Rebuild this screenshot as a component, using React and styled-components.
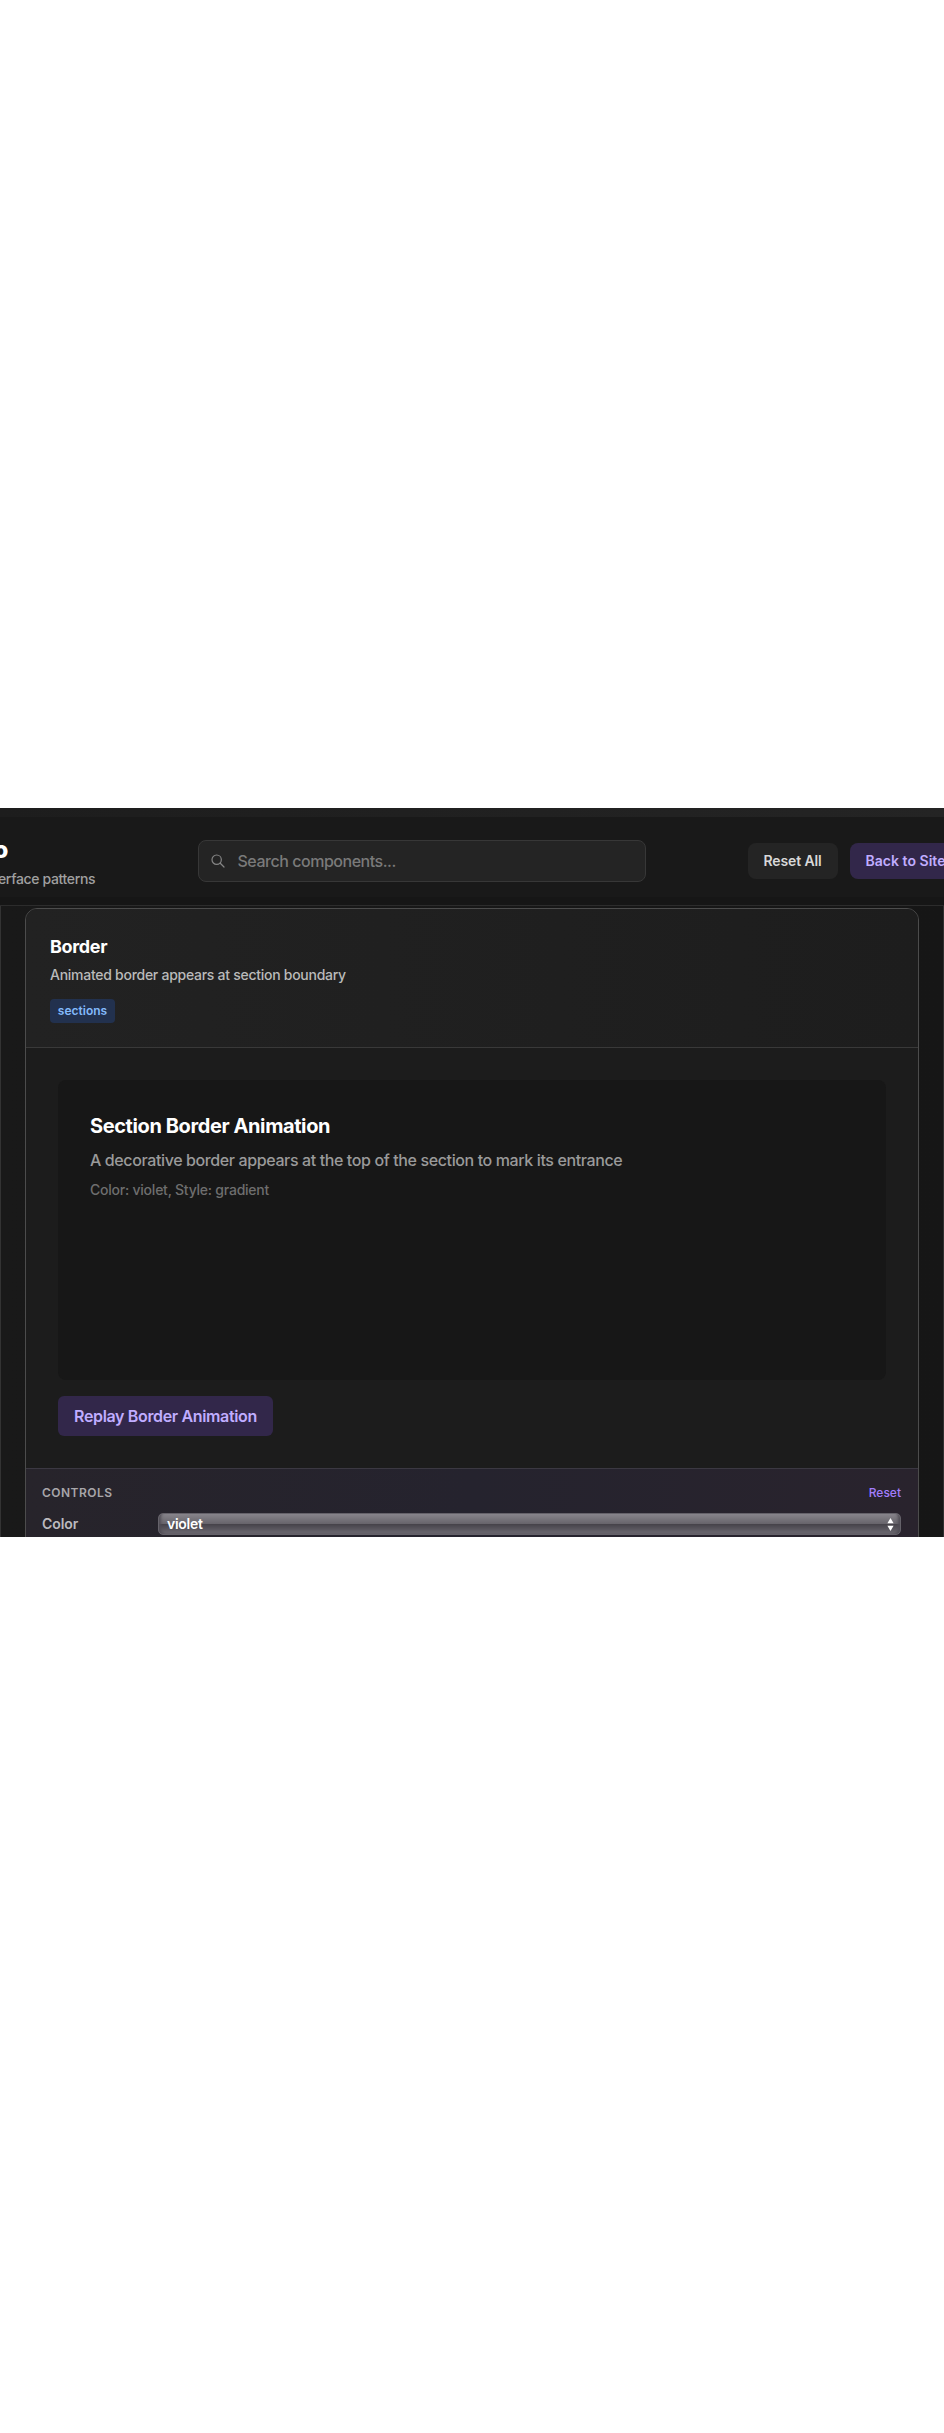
import React from "react";
import styled, { createGlobalStyle } from "styled-components";

const GlobalStyle = createGlobalStyle`
  *, *::before, *::after { box-sizing: border-box; }
  body {
    margin: 0;
    background: #fff;
    font-family: Inter, "Liberation Sans", sans-serif;
    -webkit-font-smoothing: antialiased;
  }
  h1, h2, h3, p { margin: 0; }
  button { font-family: inherit; border: 0; padding: 0; flex: none; }
`;

const Page = styled.div`
  height: 2433px;
  padding-top: 808px;
  overflow: hidden;
`;

const Screen = styled.div`
  display: flex;
  flex-direction: column;
  height: 729px;
  overflow: hidden;
  background: #181818;
`;

const TopStrip = styled.div`
  flex: none;
  height: 9px;
  background: linear-gradient(90deg, #1d1d1d, #242424);
`;

const Header = styled.header`
  flex: none;
  display: flex;
  align-items: center;
  height: 89px;
  overflow: hidden;
  background: linear-gradient(#191919 0 80px, #161616 80px);
  border-bottom: 1px solid #2c2c2c;
`;

const Brand = styled.div`
  flex: none;
  width: 197.5px;
  display: flex;
  flex-direction: column;
  gap: 3px;
  padding-top: 1px;
  white-space: nowrap;
`;

const BrandTitle = styled.h1`
  margin-left: -6.5px;
  font-size: 24px;
  line-height: 32px;
  font-weight: 800;
  color: #fff;
`;

const BrandSubtitle = styled.p`
  margin-left: -2px;
  font-size: 14px;
  line-height: 20px;
  font-weight: 500;
  letter-spacing: -0.35px;
  color: #a0a0a0;
`;

const SearchBox = styled.div`
  flex: none;
  display: flex;
  align-items: center;
  gap: 12px;
  width: 448px;
  height: 42px;
  padding-left: 11px;
  border: 1px solid #373737;
  border-radius: 8px;
  background: #242424;
  font-size: 16px;
  font-weight: 500;
  letter-spacing: -0.47px;
  color: #7a7a7a;
`;

const SearchGlyph = styled.svg`
  width: 16px;
  height: 16px;
  fill: none;
  stroke: #858585;
  stroke-width: 1.8;
  stroke-linecap: round;
  stroke-linejoin: round;
`;

const Actions = styled.div`
  flex: none;
  display: flex;
  gap: 12px;
  margin-left: 102px;
`;

const HeaderButton = styled.button`
  width: ${(p) => (p.$accent ? 112 : 90)}px;
  height: 36px;
  padding-bottom: 1px;
  border-radius: 8px;
  background: ${(p) => (p.$accent ? "#32274a" : "#242424")};
  color: ${(p) => (p.$accent ? "#c0adff" : "#d8d8d8")};
  font-size: 14px;
  font-weight: 600;
  letter-spacing: ${(p) => (p.$accent ? 0.03 : -0.12)}px;
`;

const Main = styled.main`
  flex: 1;
  min-height: 0;
  padding: 2px 24px 0;
  border-left: 1px solid #333;
  border-right: 1px solid #303030;
  background: linear-gradient(90deg, #191919, #161616);
`;

const Card = styled.article`
  height: 700px;
  border: 1px solid #4c4c4c;
  border-radius: 12px;
  overflow: hidden;
  background: #1c1c1c;
`;

const CardHead = styled.div`
  height: 139px;
  padding: 24px 24px 0;
  border-bottom: 1px solid #393939;
  background: linear-gradient(90deg, #222, #1d1d1d);
`;

const CardTitle = styled.h2`
  font-size: 18px;
  line-height: 28px;
  font-weight: 700;
  letter-spacing: -0.35px;
  color: #fff;
`;

const CardText = styled.p`
  margin-top: 4px;
  font-size: 14px;
  line-height: 20px;
  font-weight: 500;
  letter-spacing: -0.27px;
  color: #bababa;
`;

const Tag = styled.span`
  display: block;
  width: 65px;
  height: 24px;
  margin-top: 14px;
  border-radius: 4px;
  background: #22314e;
  text-align: center;
  font-size: 12px;
  line-height: 24px;
  font-weight: 600;
  letter-spacing: 0;
  color: #83b9fb;
`;

const Preview = styled.div`
  padding: 32px;
`;

const Stage = styled.section`
  height: 300px;
  padding: 32px;
  border-radius: 8px;
  background: #171717;
`;

const StageTitle = styled.h3`
  font-size: 20px;
  line-height: 28px;
  font-weight: 700;
  letter-spacing: -0.4px;
  color: #fff;
`;

const StageText = styled.p`
  margin-top: 8px;
  font-size: 16px;
  line-height: 24px;
  font-weight: 500;
  letter-spacing: -0.385px;
  color: #9a9a9a;
`;

const StageNote = styled.p`
  margin-top: 8px;
  font-size: 14px;
  line-height: 20px;
  font-weight: 500;
  letter-spacing: -0.23px;
  color: #6e6e6e;
`;

const ReplayButton = styled.button`
  display: block;
  width: 215px;
  height: 40px;
  margin-top: 16px;
  border-radius: 6px;
  background: #32274a;
  color: #c0adff;
  font-size: 16px;
  font-weight: 600;
  letter-spacing: -0.35px;
`;

const Controls = styled.div`
  height: 120px;
  padding: 16px 17px 0 16px;
  border-top: 1px solid #3b3842;
  background: linear-gradient(90deg, #27242b, #25232e 50%, #29232d);
`;

const ControlsHead = styled.div`
  display: flex;
  justify-content: space-between;
  font-size: 12px;
  line-height: 16px;
`;

const ControlsTitle = styled.span`
  font-weight: 600;
  letter-spacing: 0.48px;
  color: #a8a6aa;
`;

const ResetLink = styled.span`
  font-weight: 500;
  color: #a27dfc;
`;

const Field = styled.div`
  display: flex;
  align-items: center;
  margin-top: 12px;
`;

const FieldLabel = styled.span`
  width: 116px;
  padding-bottom: 1px;
  font-size: 14px;
  line-height: 19px;
  font-weight: 600;
  letter-spacing: -0.1px;
  color: #bcbabf;
`;

const Select = styled.div`
  flex: 1;
  display: flex;
  align-items: center;
  justify-content: space-between;
  height: 22px;
  padding: 0 6px 0 8px;
  border: 1px solid #65626a;
  border-radius: 5px;
  background: linear-gradient(#87848b, #68656c 48%, #454249 50%, #6d6a72);
  box-shadow: inset 4px -1px 3px -2px #504d55, inset -4px -1px 3px -2px #504d55;
`;

const SelectValue = styled.span`
  padding-bottom: 1px;
  font-size: 14px;
  line-height: 19px;
  font-weight: 600;
  letter-spacing: -0.28px;
  color: #fff;
`;

const Stepper = styled.svg`
  width: 7px;
  height: 13px;
  fill: #fff;
`;

export default function App() {
  return (
    <Page>
      <GlobalStyle />
      <Screen>
        <TopStrip />
        <Header>
          <Brand>
            <BrandTitle>o</BrandTitle>
            <BrandSubtitle>erface patterns</BrandSubtitle>
          </Brand>
          <SearchBox>
            <SearchGlyph viewBox="0 0 24 24">
              <path d="M21 21l-6-6m2-5a7 7 0 11-14 0 7 7 0 0114 0z" />
            </SearchGlyph>
            <span>Search components...</span>
          </SearchBox>
          <Actions>
            <HeaderButton>Reset All</HeaderButton>
            <HeaderButton $accent>Back to Site</HeaderButton>
          </Actions>
        </Header>
        <Main>
          <Card>
            <CardHead>
              <CardTitle>Border</CardTitle>
              <CardText>Animated border appears at section boundary</CardText>
              <Tag>sections</Tag>
            </CardHead>
            <Preview>
              <Stage>
                <StageTitle>Section Border Animation</StageTitle>
                <StageText>
                  A decorative border appears at the top of the section to mark its entrance
                </StageText>
                <StageNote>Color: violet, Style: gradient</StageNote>
              </Stage>
              <ReplayButton>Replay Border Animation</ReplayButton>
            </Preview>
            <Controls>
              <ControlsHead>
                <ControlsTitle>CONTROLS</ControlsTitle>
                <ResetLink>Reset</ResetLink>
              </ControlsHead>
              <Field>
                <FieldLabel>Color</FieldLabel>
                <Select>
                  <SelectValue>violet</SelectValue>
                  <Stepper viewBox="0 0 7 13">
                    <path d="M3.5 0L6.6 5.2H0.4zM3.5 13L0.4 7.8h6.2z" />
                  </Stepper>
                </Select>
              </Field>
            </Controls>
          </Card>
        </Main>
      </Screen>
    </Page>
  );
}
